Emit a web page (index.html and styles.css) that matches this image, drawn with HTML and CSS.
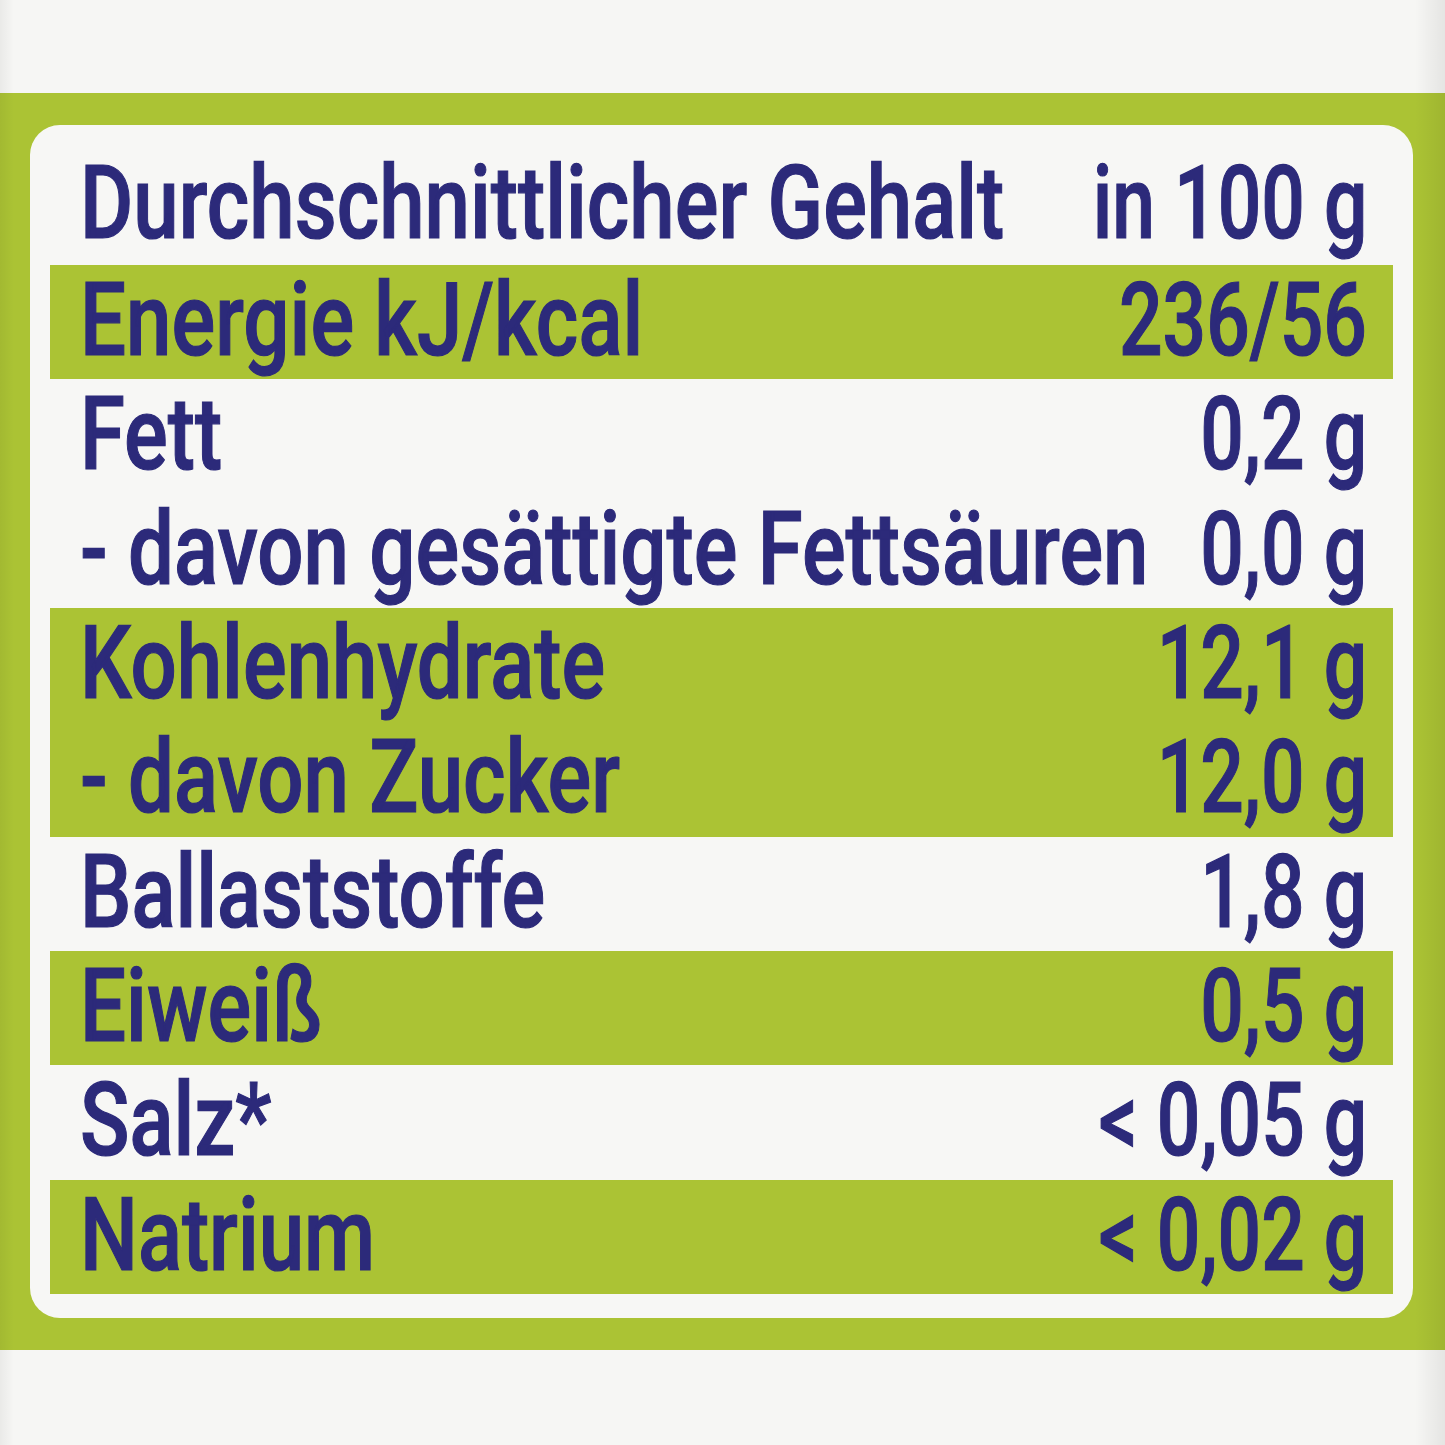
FILE: index.html
```html
<!DOCTYPE html>
<html lang="de">
<head>
<meta charset="utf-8">
<title>Nährwerte</title>
<link rel="stylesheet" href="styles.css">
</head>
<body>
<div class="top"></div>
<section class="band">
  <div class="card">
    <div class="row head"><div class="txt"><span>Durchschnittlicher Gehalt</span><span class="val">in 100 g</span></div></div>
    <div class="row green"><div class="txt"><span>Energie kJ/kcal</span><span class="val">236/56</span></div></div>
    <div class="row"><div class="txt"><span>Fett</span><span class="val">0,2 g</span></div></div>
    <div class="row"><div class="txt"><span>- davon gesättigte Fettsäuren</span><span class="val">0,0 g</span></div></div>
    <div class="row green"><div class="txt"><span>Kohlenhydrate</span><span class="val">12,1 g</span></div></div>
    <div class="row green"><div class="txt"><span>- davon Zucker</span><span class="val">12,0 g</span></div></div>
    <div class="row"><div class="txt"><span>Ballaststoffe</span><span class="val">1,8 g</span></div></div>
    <div class="row green"><div class="txt"><span>Eiweiß</span><span class="val">0,5 g</span></div></div>
    <div class="row"><div class="txt"><span>Salz*</span><span class="val">&lt; 0,05 g</span></div></div>
    <div class="row green"><div class="txt"><span>Natrium</span><span class="val">&lt; 0,02 g</span></div></div>
  </div>
</section>
<div class="bottom"></div>
</body>
</html>
```
FILE: styles.css
```css
html, body {
  margin: 0;
  padding: 0;
}
body {
  width: 1445px;
  height: 1445px;
  background: #f6f6f4;
  overflow: hidden;
  font-family: Roboto, "Liberation Sans", sans-serif;
  font-weight: 500;
  color: #2c2a7a;
  position: relative;
}
body::after {
  content: "";
  position: absolute;
  inset: 0;
  pointer-events: none;
  background: linear-gradient(to right, rgba(0,0,0,0.05) 0, rgba(0,0,0,0) 14px, rgba(0,0,0,0) 1415px, rgba(0,0,0,0.07) 1445px);
}
.top {
  height: 93px;
}
.band {
  background: #abc334;
  padding: 32px 32px 32px 30px;
}
.card {
  background: #f7f7f5;
  border-radius: 30px;
  padding: 5px 20px 24px 20px;
}
.row {
  height: 114.33px;
  box-sizing: border-box;
  padding: 0 26px 0 30px;
  font-size: 102px;
  line-height: 110px;
  white-space: nowrap;
  overflow: visible;
  -webkit-text-stroke: 1.2px currentColor;
}
.txt {
  display: flex;
  justify-content: space-between;
  width: calc(100% / 0.8);
  transform: scaleX(0.8);
  transform-origin: left top;
}
.val {
  display: inline-block;
  transform: scaleX(0.94);
  transform-origin: right top;
}
.row.head {
  height: 135px;
  padding-top: 18px;
}
.row.green {
  background: #abc334;
}
```
